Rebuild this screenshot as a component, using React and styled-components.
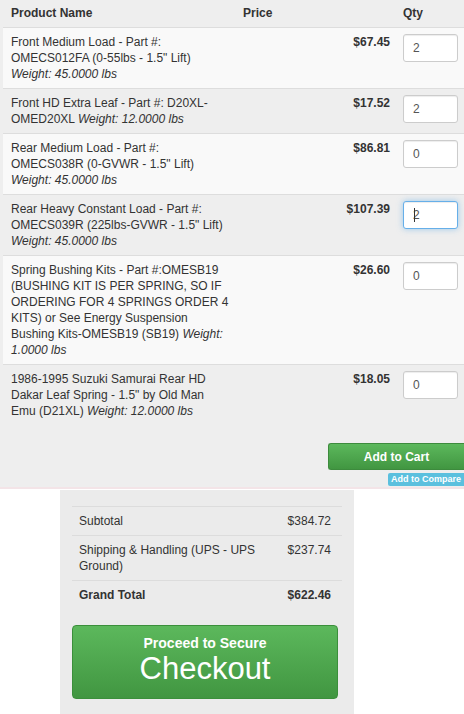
import React from "react";
import styled, { createGlobalStyle } from "styled-components";

const Global = createGlobalStyle`
  html, body { margin: 0; padding: 0; background: #fff; }
  body { font-family: "Liberation Sans", Arial, Helvetica, sans-serif; font-size: 12px; color: #333; }
  * { box-sizing: border-box; }
`;

const CartBox = styled.div`
  background: #eeeeee;
  padding: 0 0 1px 3px;
  border-bottom: 2px solid #f3e4e7;
`;

const Table = styled.table`
  width: 461px;
  border-collapse: collapse;
  table-layout: fixed;
`;

const HeadCell = styled.th`
  text-align: left;
  font-weight: bold;
  font-size: 12px;
  line-height: 15px;
  padding: 6px 8px 6px ${(p) => p.$left || 8}px;
  background: #eeeeee;
  color: #333;
`;

const Row = styled.tr`
  background: ${(p) => (p.$alt ? "#eeeeee" : "#f9f9f9")};
  border-top: 1px solid #dddddd;
`;

const NameCell = styled.td`
  padding: 6px 8px;
  line-height: 16px;
  vertical-align: top;
`;

const Weight = styled.em`
  font-style: italic;
`;

const PriceCell = styled.td`
  padding: 6px 7px 6px 8px;
  line-height: 16px;
  vertical-align: top;
  text-align: right;
  font-weight: bold;
`;

const QtyCell = styled.td`
  padding: 6px;
  vertical-align: top;
`;

const QtyWrap = styled.span`
  position: relative;
  display: inline-block;
`;

const QtyInput = styled.input`
  display: block;
  width: 55px;
  height: 28px;
  padding: 0 9px;
  font-family: inherit;
  font-size: 12px;
  color: #555;
  background: #fff;
  border: 1px solid ${(p) => (p.$focus ? "#66afe9" : "#cccccc")};
  border-radius: 3px;
  box-shadow: ${(p) =>
    p.$focus
      ? "inset 0 1px 1px rgba(0,0,0,.075), 0 0 6px rgba(102,175,233,.6)"
      : "inset 0 1px 1px rgba(0,0,0,.075)"};
  outline: none;
`;

const Caret = styled.span`
  position: absolute;
  left: 11px;
  top: 7px;
  width: 1px;
  height: 14px;
  background: #333;
`;

const Actions = styled.div`
  display: flex;
  flex-direction: column;
  align-items: flex-end;
  padding-top: 18px;
  gap: 3px;
`;

const CartButton = styled.button`
  width: 136px;
  height: 27px;
  border: 1px solid #3d8b3d;
  border-right: none;
  border-radius: 3px 0 0 3px;
  background: linear-gradient(#5cb85c, #419641);
  color: #fff;
  font-family: inherit;
  font-weight: bold;
  font-size: 12px;
  padding: 0;
`;

const CompareButton = styled.button`
  width: 76px;
  height: 13px;
  border: none;
  border-radius: 2px 0 0 2px;
  background: #5bc0de;
  color: #fff;
  font-family: inherit;
  font-weight: bold;
  font-size: 9px;
  line-height: 13px;
  padding: 0;
`;

const Summary = styled.div`
  width: 294px;
  margin: 1px 0 0 60px;
  background: #ebebeb;
  padding: 16px 12px 15px 12px;
`;

const TotalsTable = styled.table`
  width: 270px;
  border-collapse: collapse;
`;

const TotalsRow = styled.tr`
  border-top: 1px solid #dcdcdc;
`;

const TotalsLabel = styled.td`
  padding: 6px 8px 6px 7px;
  line-height: 16px;
  vertical-align: top;
  font-weight: ${(p) => (p.$bold ? "bold" : "normal")};
`;

const TotalsValue = styled.td`
  padding: 6px 11px 6px 8px;
  line-height: 16px;
  vertical-align: top;
  text-align: right;
  white-space: nowrap;
  font-weight: ${(p) => (p.$bold ? "bold" : "normal")};
`;

const CheckoutButton = styled.button`
  margin-top: 16px;
  width: 266px;
  height: 74px;
  border: 1px solid #3b8f3b;
  border-radius: 4px;
  background: linear-gradient(#5cb85c, #419641);
  color: #fff;
  font-family: inherit;
  display: flex;
  flex-direction: column;
  align-items: center;
  justify-content: center;
  padding: 0 0 4px;
`;

const CheckoutSmall = styled.span`
  font-size: 14px;
  font-weight: bold;
  line-height: 18px;
`;

const CheckoutBig = styled.span`
  font-size: 31px;
  line-height: 34px;
`;

const items = [
  { name: "Front Medium Load - Part #: OMECS012FA (0-55lbs - 1.5\" Lift)", weight: "45.0000", br: true, price: "$67.45", qty: "2" },
  { name: "Front HD Extra Leaf - Part #: D20XL-OMED20XL", weight: "12.0000", price: "$17.52", qty: "2" },
  { name: "Rear Medium Load - Part #: OMECS038R (0-GVWR - 1.5\" Lift)", weight: "45.0000", br: true, price: "$86.81", qty: "0" },
  { name: "Rear Heavy Constant Load - Part #: OMECS039R (225lbs-GVWR - 1.5\" Lift)", weight: "45.0000", br: true, price: "$107.39", qty: "2", focus: true },
  { name: "Spring Bushing Kits - Part #:OMESB19 (BUSHING KIT IS PER SPRING, SO IF ORDERING FOR 4 SPRINGS ORDER 4 KITS) or See Energy Suspension Bushing Kits-OMESB19 (SB19)", weight: "1.0000", price: "$26.60", qty: "0" },
  { name: "1986-1995 Suzuki Samurai Rear HD Dakar Leaf Spring - 1.5\" by Old Man Emu (D21XL)", weight: "12.0000", price: "$18.05", qty: "0" },
];

export default function App() {
  return (
    <>
      <Global />
      <CartBox>
        <Table>
          <colgroup>
            <col style={{ width: 236 }} />
            <col style={{ width: 158 }} />
            <col style={{ width: 67 }} />
          </colgroup>
          <thead>
            <tr>
              <HeadCell>Product Name</HeadCell>
              <HeadCell $left={4}>Price</HeadCell>
              <HeadCell $left={6}>Qty</HeadCell>
            </tr>
          </thead>
          <tbody>
            {items.map((it, i) => (
              <Row key={i} $alt={i % 2 === 1}>
                <NameCell>
                  {it.name}
                  {it.br ? <br /> : " "}
                  <Weight>Weight: {it.weight} lbs</Weight>
                </NameCell>
                <PriceCell>{it.price}</PriceCell>
                <QtyCell>
                  <QtyWrap>
                    <QtyInput type="text" defaultValue={it.qty} $focus={it.focus} readOnly />
                    {it.focus && <Caret />}
                  </QtyWrap>
                </QtyCell>
              </Row>
            ))}
          </tbody>
        </Table>
        <Actions>
          <CartButton type="button">Add to Cart</CartButton>
          <CompareButton type="button">Add to Compare</CompareButton>
        </Actions>
      </CartBox>
      <Summary>
        <TotalsTable>
          <tbody>
            <TotalsRow>
              <TotalsLabel>Subtotal</TotalsLabel>
              <TotalsValue>$384.72</TotalsValue>
            </TotalsRow>
            <TotalsRow>
              <TotalsLabel>Shipping &amp; Handling (UPS - UPS Ground)</TotalsLabel>
              <TotalsValue>$237.74</TotalsValue>
            </TotalsRow>
            <TotalsRow>
              <TotalsLabel $bold>Grand Total</TotalsLabel>
              <TotalsValue $bold>$622.46</TotalsValue>
            </TotalsRow>
          </tbody>
        </TotalsTable>
        <CheckoutButton type="button">
          <CheckoutSmall>Proceed to Secure</CheckoutSmall>
          <CheckoutBig>Checkout</CheckoutBig>
        </CheckoutButton>
      </Summary>
    </>
  );
}
